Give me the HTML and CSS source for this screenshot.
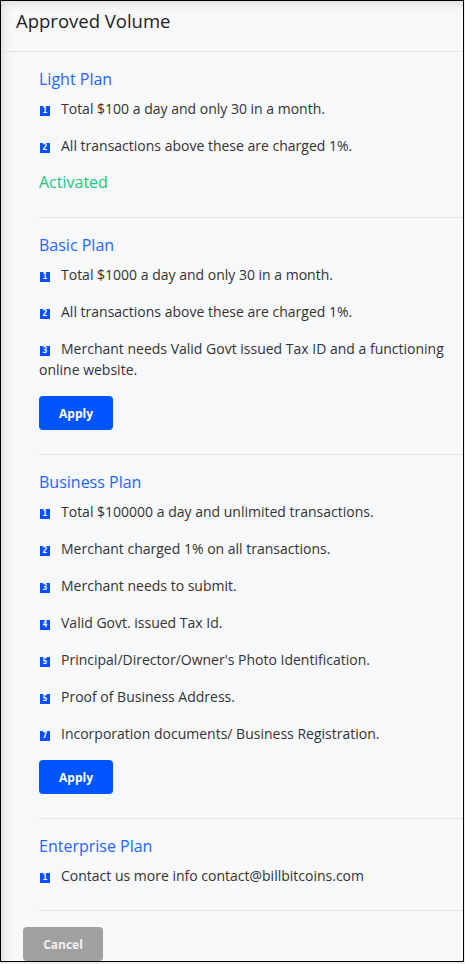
FILE: index.html
```html
<!DOCTYPE html>
<html lang="en">
<head>
    <meta charset="UTF-8">
    <meta name="viewport" content="width=device-width, initial-scale=1.0">
    <title>Approved Volume</title>
    <link rel="stylesheet" href="styles.css">
</head>
<body>
    <div class="modal">
        <div class="modal-header">
            <h2>Approved Volume</h2>
        </div>

        <div class="modal-body">
            <div class="plan">
                <h3>Light Plan</h3>
                <p><span class="num">1</span>Total $100 a day and only 30 in a month.</p>
                <p><span class="num">2</span>All transactions above these are charged 1%.</p>
                <div class="activated">Activated</div>
            </div>

            <div class="plan">
                <h3>Basic Plan</h3>
                <p><span class="num">1</span>Total $1000 a day and only 30 in a month.</p>
                <p><span class="num">2</span>All transactions above these are charged 1%.</p>
                <p><span class="num">3</span>Merchant needs Valid Govt issued Tax ID and a functioning online website.</p>
                <button class="btn-apply">Apply</button>
            </div>

            <div class="plan">
                <h3>Business Plan</h3>
                <p><span class="num">1</span>Total $100000 a day and unlimited transactions.</p>
                <p><span class="num">2</span>Merchant charged 1% on all transactions.</p>
                <p><span class="num">3</span>Merchant needs to submit.</p>
                <p><span class="num">4</span>Valid Govt. issued Tax Id.</p>
                <p><span class="num">5</span>Principal/Director/Owner's Photo Identification.</p>
                <p><span class="num">5</span>Proof of Business Address.</p>
                <p><span class="num">7</span>Incorporation documents/ Business Registration.</p>
                <button class="btn-apply">Apply</button>
            </div>

            <div class="plan">
                <h3>Enterprise Plan</h3>
                <p><span class="num">1</span>Contact us more info contact@billbitcoins.com</p>
            </div>
        </div>

        <div class="modal-footer">
            <button class="btn-cancel">Cancel</button>
        </div>
    </div>
</body>
</html>
```

FILE: styles.css
```css
body {
    margin: 0;
    background: #f0f0f0;
    font-family: "Open Sans", "Noto Sans", sans-serif;
}

.modal {
    width: 462px;
    height: 960px;
    border: 1px solid #000;
    background: #f7f8fa;
    box-shadow: inset 8px 8px 10px -6px rgba(0,0,0,0.12);
    overflow: hidden;
}

.modal-header {
    height: 51px;
    box-sizing: border-box;
    padding: 7px 15px 0;
    border-bottom: 1px solid #e2e3e6;
}

.modal-header h2 {
    margin: 0;
    font-size: 18.5px;
    font-weight: 500;
    line-height: 26px;
    color: #1e1e1e;
}

.modal-body {
    padding-left: 38px;
}

.plan {
    padding: 15px 16px 24px 0;
    border-bottom: 1px solid #e2e3e6;
}

.plan h3 {
    margin: 0 0 7px;
    font-size: 16px;
    font-weight: 400;
    line-height: 24px;
    color: #1f66ff;
}

.plan p {
    margin: 0 0 16px;
    font-size: 14px;
    line-height: 21px;
    color: #333;
}

.plan p:last-child {
    margin-bottom: 0;
}

.num {
    display: inline-block;
    width: 10px;
    height: 10px;
    margin: 0 11px 0 1px;
    background: #0a4cff;
    color: #fff;
    font-family: "DejaVu Sans Mono", monospace;
    font-size: 8px;
    font-weight: bold;
    line-height: 10px;
    text-align: center;
    vertical-align: 1px;
}

.activated {
    font-size: 16px;
    line-height: 21px;
    color: #19c77a;
}

.btn-apply {
    display: block;
    width: 74px;
    height: 34px;
    margin-top: 1px;
    border: none;
    border-radius: 4px;
    background: #0055ff;
    color: #fff;
    font-family: "Open Sans", sans-serif;
    font-size: 12px;
    font-weight: bold;
    cursor: pointer;
}

.modal-footer {
    padding: 16px 22px;
}

.btn-cancel {
    width: 80px;
    height: 34px;
    border: none;
    border-radius: 4px;
    background: #a0a0a0;
    color: #f0f0f0;
    font-family: "Open Sans", sans-serif;
    font-size: 12px;
    font-weight: bold;
}
```
